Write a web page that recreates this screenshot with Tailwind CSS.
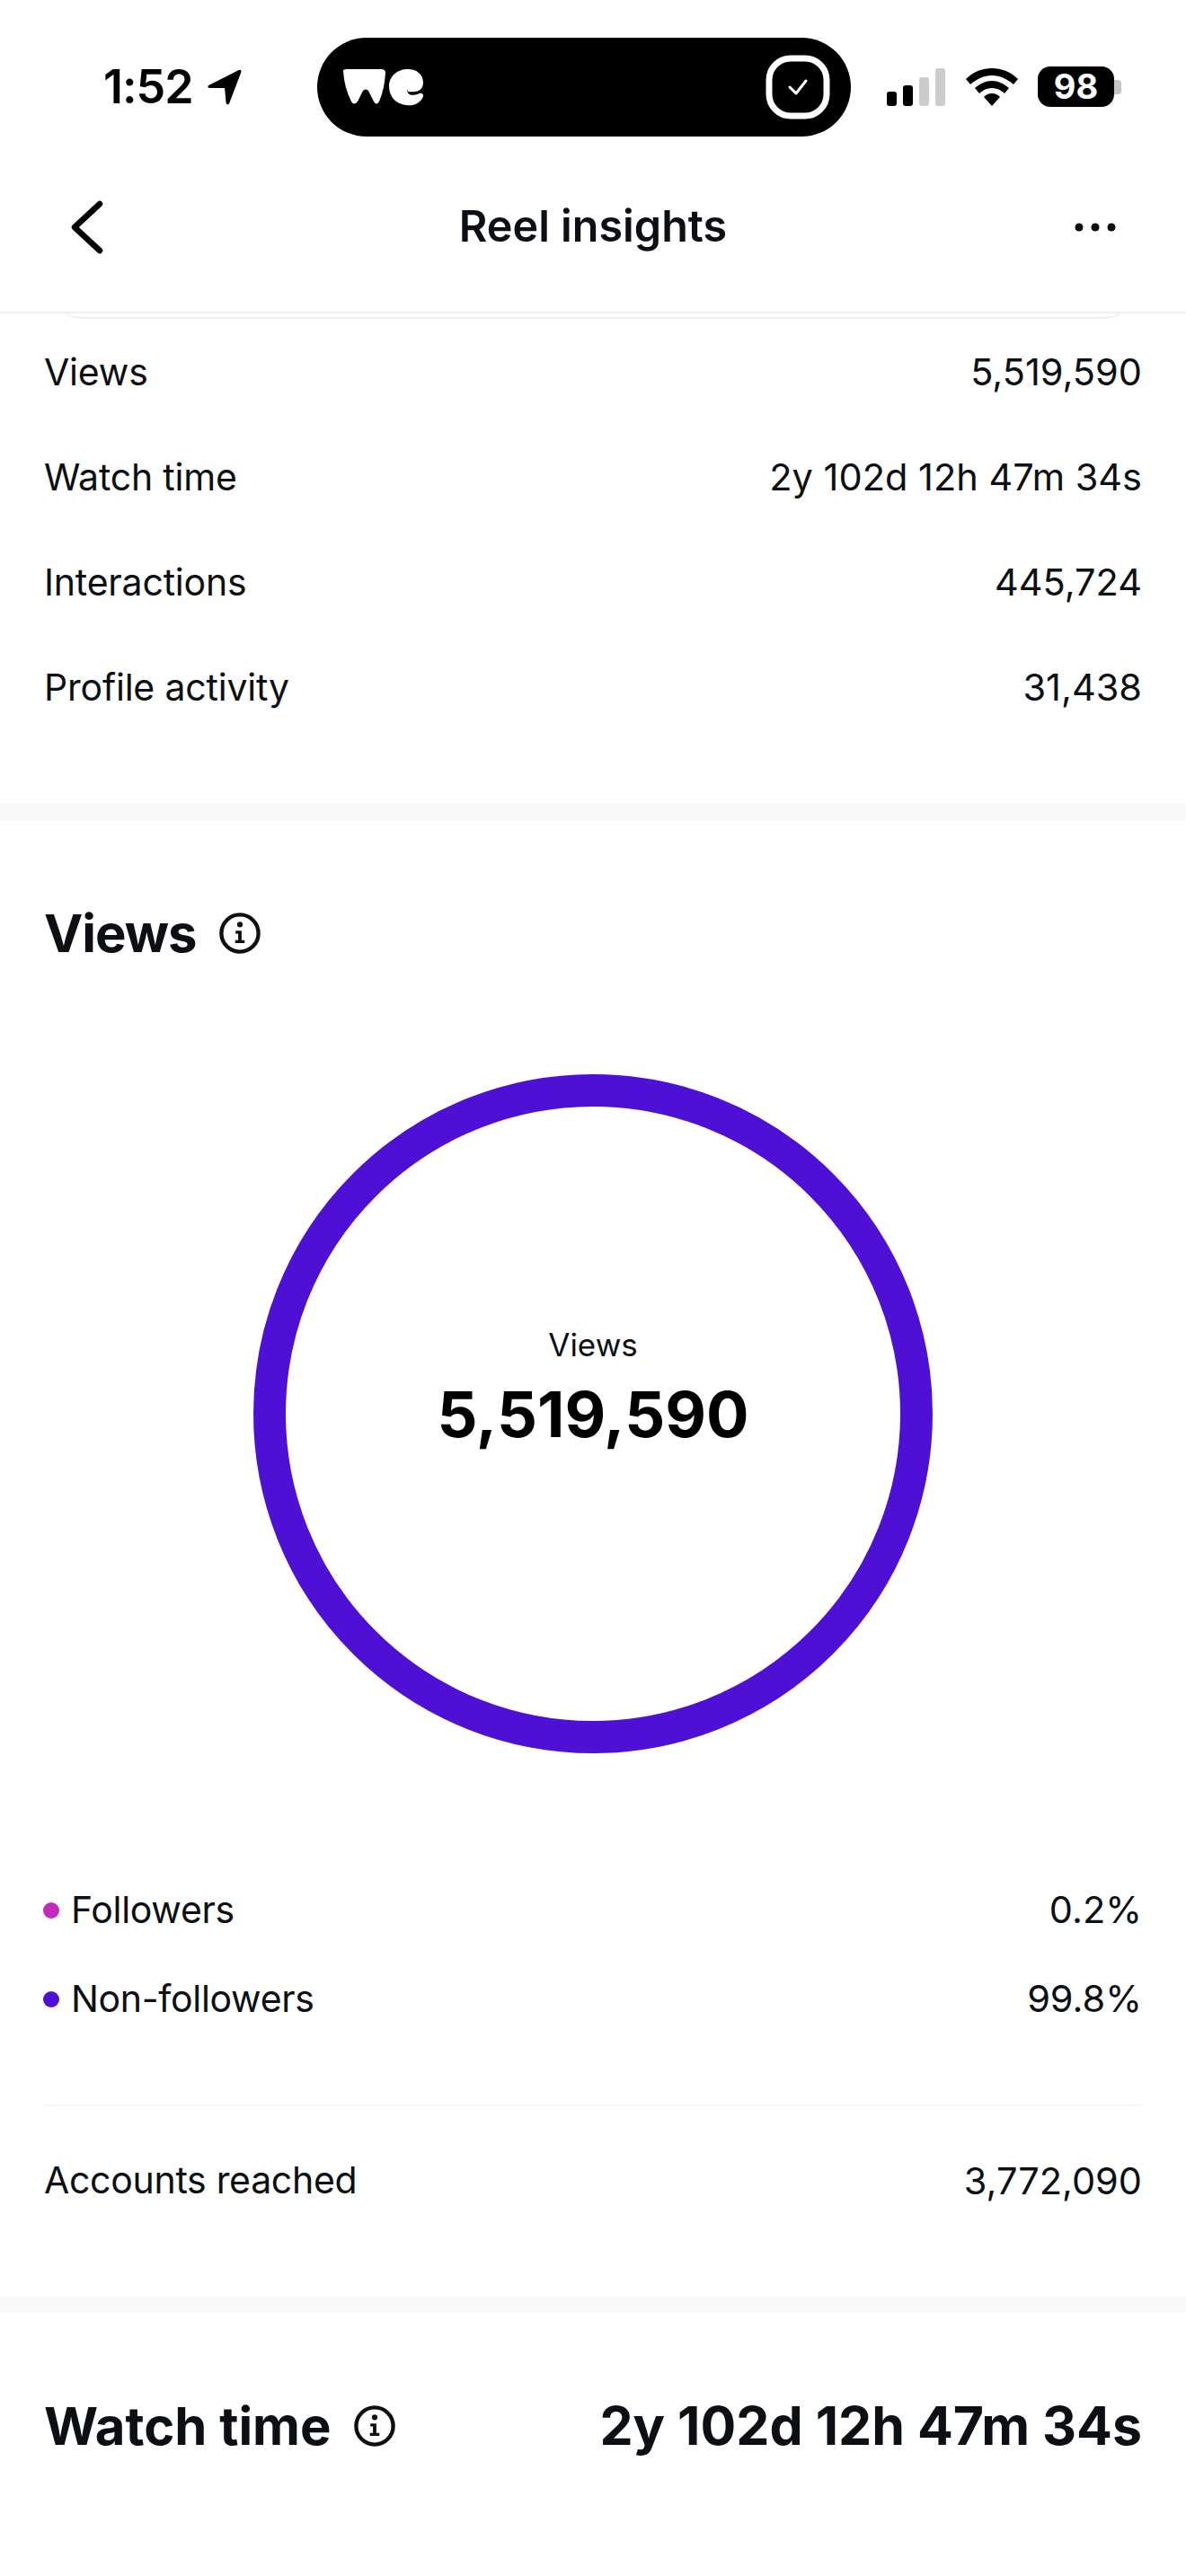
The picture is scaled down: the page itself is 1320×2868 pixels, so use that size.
<!DOCTYPE html>
<html lang="en">
<head>
    <meta charset="UTF-8">
    <meta name="viewport" content="width=device-width, initial-scale=1.0">
    <title>Reel insights</title>
    <script src="https://cdn.jsdelivr.net/npm/@tailwindcss/browser@4"></script>
</head>
<body class="bg-white font-['Inter',sans-serif] text-[#0c1014] w-[1320px] h-[2868px] overflow-hidden">
    <!-- status bar -->
    <div class="h-[190px] flex items-start">
        <div class="w-[353px] pl-[115px] pt-[66px] flex items-center gap-[13px]">
            <span class="text-[52px] leading-[62px] font-semibold text-black tracking-[-1px]">1:52</span>
            <svg class="w-[42px] h-[42px]" viewBox="0 0 40 40"><path d="M4 18 L36 2 Q39 1 38.500 4 L26 37 Q24 40 22.500 37 L21 21 L5 21 Q2 20 4 18 Z" fill="#000"/></svg>
        </div>
        <div class="mt-[42px] w-[594px] h-[110px] rounded-[55px] bg-black flex items-center justify-between pl-[27px] pr-[23px]">
            <svg class="w-[92px] h-[44px]" viewBox="0 0 92 44"><path d="M2 4 Q2 2 6 2 L44 2 Q49 2 49 6 Q48 24 42 38 Q39 43 36 38 L30 26 Q27 23 24 26 L18 38 Q14 43 11 38 Q3 22 2 4 Z" fill="#fff"/><path d="M74 2 C84 2 91 8 91 17 C91 27 82 28 74 27 L73 24 C73 32 80 32 87 29 C92 28 92 33 89 36 C84 42 78 43 72 42 C60 41 53 32 53 21 C53 10 62 2 74 2 Z" fill="#fff"/></svg>
            <svg class="w-[72px] h-[72px]" viewBox="0 0 72 72"><rect x="4" y="4" width="64" height="64" rx="24" fill="none" stroke="#fff" stroke-width="7"/><path d="M27 36 L34 43 L45 29" fill="none" stroke="#fff" stroke-width="3" stroke-linecap="round" stroke-linejoin="round"/></svg>
        </div>
        <div class="flex items-center pt-[74px] pl-[40px]">
            <div class="flex items-end gap-[7px] h-[42px]">
                <div class="w-[11px] h-[16px] rounded-[3px] bg-black"></div>
                <div class="w-[11px] h-[23px] rounded-[3px] bg-black"></div>
                <div class="w-[11px] h-[32px] rounded-[3px] bg-[#cccccc]"></div>
                <div class="w-[11px] h-[42px] rounded-[3px] bg-[#cccccc]"></div>
            </div>
            <svg class="ml-[23px] w-[58px] h-[42px]" viewBox="0 0 58 42"><path d="M29 0 C40 0 50 4 58 12 L53 18 C46 12 38 8 29 8 C20 8 12 12 5 18 L0 12 C8 4 18 0 29 0 Z" fill="#000"/><path d="M29 14 C36 14 42 17 48 22 L43 28 C39 24 34 22 29 22 C24 22 19 24 15 28 L10 22 C16 17 22 14 29 14 Z" fill="#000"/><path d="M29 28 C33 28 36 30 38 32 L29 42 L20 32 C22 30 25 28 29 28 Z" fill="#000"/></svg>
            <div class="ml-[22px] w-[85px] h-[45px] rounded-[14px] bg-black text-white text-[38px] leading-[45px] font-bold text-center">98</div>
            <div class="w-[8px] h-[16px] rounded-r-[4px] bg-[#c4c4c4]"></div>
        </div>
    </div>

    <!-- header -->
    <div class="h-[159px] pb-[32px] relative border-b-2 border-[#efefef] flex items-center px-[78px]">
        <div class="flex-1 flex justify-start">
            <svg class="w-[38px] h-[60px]" viewBox="0 0 38 60"><path d="M33 4 L5 30 L33 56" fill="none" stroke="#000" stroke-width="6.500" stroke-linecap="round" stroke-linejoin="round"/></svg>
        </div>
        <span class="text-[48.500px] font-semibold">Reel insights</span>
        <div class="flex-1 flex justify-end">
            <svg class="w-[46px] h-[10px]" viewBox="0 0 46 10"><circle cx="5" cy="5" r="4.500" fill="#0c1014"/><circle cx="23" cy="5" r="4.500" fill="#0c1014"/><circle cx="41" cy="5" r="4.500" fill="#0c1014"/></svg>
        </div>
        <div class="absolute left-[74px] right-[74px] -bottom-[8px] h-[6px] rounded-bl-[24px_6px] rounded-br-[24px_6px] border-b-2 border-x-2 border-[#eeeef0]"></div>
    </div>

    <!-- overview rows -->
    <div class="px-[49px] pt-[7px] h-[546px]">
        <div class="h-[117px] flex items-center justify-between"><span class="text-[41px] tracking-[-0.200px]">Views</span><span class="text-[41.500px]">5,519,590</span></div>
        <div class="h-[117px] flex items-center justify-between"><span class="text-[41px] tracking-[-0.200px]">Watch time</span><span class="text-[41.500px]">2y 102d 12h 47m 34s</span></div>
        <div class="h-[117px] flex items-center justify-between"><span class="text-[41px] tracking-[-0.200px]">Interactions</span><span class="text-[41.500px]">445,724</span></div>
        <div class="h-[117px] flex items-center justify-between"><span class="text-[41px] tracking-[-0.200px]">Profile activity</span><span class="text-[41.500px]">31,438</span></div>
    </div>

    <div class="h-[18px] bg-[#f9f9f9]"></div>

    <!-- views -->
    <div class="px-[49px] h-[1644px]">
        <div class="pt-[94px] flex items-center gap-[25px]">
            <h2 class="text-[58px] leading-[64px] font-bold tracking-[-1px]">Views</h2>
            <svg class="w-[46px] h-[46px]" viewBox="0 0 48 48"><circle cx="24" cy="24" r="21.500" fill="none" stroke="#0c1014" stroke-width="4.500"/><circle cx="24" cy="14" r="3.200" fill="#0c1014"/><path d="M19 21 H26 V32 H29.500 V35.500 H18.500 V32 H22 V24.500 H19 Z" fill="#0c1014"/></svg>
        </div>
        <div class="mt-[125px] mx-auto relative w-[756px] h-[756px] rounded-full border-[36px] border-[#4f10d5] flex flex-col items-center justify-center pb-[54px]">
            <span class="text-[35px] leading-[42px] text-[#0c1014]">Views</span>
            <span class="mt-[13px] text-[70.500px] leading-[88px] font-bold text-black">5,519,590</span>
        </div>
        <div class="mt-[125px]">
            <div class="h-[99px] flex items-center justify-between">
                <span class="flex items-center gap-[13px] text-[41px] tracking-[-0.300px]"><span class="-ml-[1px] w-[18px] h-[18px] rounded-full bg-[#c42ab9]"></span>Followers</span>
                <span class="text-[41.500px]">0.2%</span>
            </div>
            <div class="h-[99px] flex items-center justify-between">
                <span class="flex items-center gap-[13px] text-[41px] tracking-[-0.300px]"><span class="-ml-[1px] w-[18px] h-[18px] rounded-full bg-[#4f10d5]"></span>Non-followers</span>
                <span class="text-[41.500px]">99.8%</span>
            </div>
        </div>
        <div class="mt-[68px] h-[2px] bg-[#f7f7f7]"></div>
        <div class="h-[166px] flex items-center justify-between"><span class="text-[41px] tracking-[-0.300px]">Accounts reached</span><span class="text-[41.500px]">3,772,090</span></div>
    </div>

    <div class="h-[18px] bg-[#f9f9f9]"></div>

    <!-- watch time -->
    <div class="px-[49px] pt-[94px] flex items-center justify-between">
        <div class="flex items-center gap-[25px]">
            <h2 class="text-[58px] leading-[64px] font-bold">Watch time</h2>
            <svg class="w-[46px] h-[46px]" viewBox="0 0 48 48"><circle cx="24" cy="24" r="21.500" fill="none" stroke="#0c1014" stroke-width="4.500"/><circle cx="24" cy="14" r="3.200" fill="#0c1014"/><path d="M19 21 H26 V32 H29.500 V35.500 H18.500 V32 H22 V24.500 H19 Z" fill="#0c1014"/></svg>
        </div>
        <span class="text-[59px] leading-[64px] font-bold">2y 102d 12h 47m 34s</span>
    </div>
</body>
</html>
